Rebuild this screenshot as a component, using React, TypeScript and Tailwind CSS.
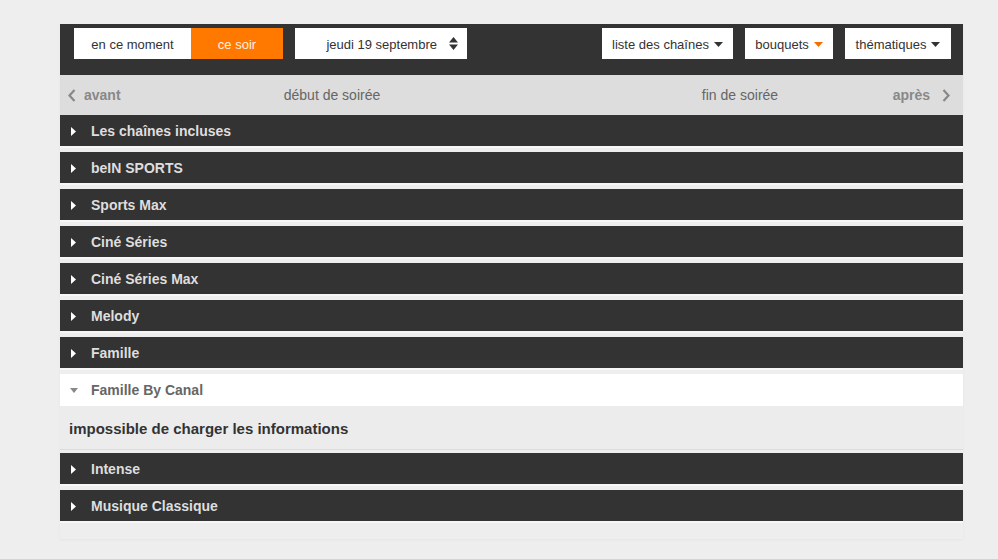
import React from 'react';

const channels = [
  'Les chaînes incluses',
  'beIN SPORTS',
  'Sports Max',
  'Ciné Séries',
  'Ciné Séries Max',
  'Melody',
  'Famille',
];

const Caret = ({ color = '#333' }: { color?: string }) => (
  <svg width="9" height="5" viewBox="0 0 9 5" className="ml-[5px]">
    <path d="M0 0h9L4.5 5z" fill={color} />
  </svg>
);

const Row = ({ title }: { title: string }) => (
  <div className="mb-[4px] border-b-2 border-[#f7f7f7]">
    <div className="flex h-[31px] items-center bg-[#333333] pl-[11px] pt-[1px]">
      <svg width="5" height="9" viewBox="0 0 5 9">
        <path d="M0 0v9l5-4.5z" fill="#fff" />
      </svg>
      <span className="ml-[15px] text-[14px] font-bold text-[#dedede]">{title}</span>
    </div>
  </div>
);

export default function App() {
  return (
    <div
      className="min-h-[559px] w-full bg-[#eeeeee] pt-[24px]"
      style={{ fontFamily: '"Liberation Sans", Arial, sans-serif' }}
    >
      <div className="ml-[60px] w-[903px] pb-[12px] shadow-[0_1px_3px_rgba(0,0,0,0.04)]">
        {/* top filters */}
        <div className="flex h-[51px] items-start bg-[#333333] pl-[14px] pr-[12px] pt-[4px]">
          <div className="flex h-[31px] text-[13px]">
            <button className="w-[117px] bg-white pt-[2px] text-[#333]">en ce moment</button>
            <button className="w-[92px] bg-[#ff7900] pt-[2px] text-[#fff0e0]">ce soir</button>
          </div>
          <div className="ml-[12px] flex h-[31px] w-[172px] items-center justify-end bg-white pr-[9px] pt-[2px] text-[13px] text-[#333]">
            <span>jeudi 19 septembre</span>
            <svg width="9" height="13" viewBox="0 0 9 13" className="ml-[12px] -mt-[3px]">
              <path d="M0 5.5h9L4.5 0zM0 7.5h9L4.5 13z" fill="#333" />
            </svg>
          </div>
          <div className="ml-auto flex gap-[12px] text-[13px] text-[#333]">
            <button className="flex h-[31px] w-[131px] items-center justify-center bg-white pt-[2px]">
              liste des chaînes
              <Caret />
            </button>
            <button className="flex h-[31px] w-[88px] items-center justify-center bg-white pt-[2px]">
              bouquets
              <Caret color="#f16e00" />
            </button>
            <button className="flex h-[31px] w-[106px] items-center justify-center bg-white pt-[2px]">
              thématiques
              <Caret />
            </button>
          </div>
        </div>

        {/* time nav */}
        <div className="flex h-[40px] items-center bg-[#dddddd] text-[14px]">
          <div className="flex w-[160px] items-center pl-[8px] font-bold text-[#888]">
            <svg width="8" height="13" viewBox="0 0 8 13">
              <path d="M6.5 1L1.5 6.5l5 5.5" stroke="#888" strokeWidth="2.2" fill="none" />
            </svg>
            <span className="ml-[8px]">avant</span>
          </div>
          <div className="w-[224px] text-center text-[#666]">début de soirée</div>
          <div className="flex-1" />
          <div className="w-[224px] text-center text-[#666]">fin de soirée</div>
          <div className="flex w-[111px] items-center justify-end pr-[13px] font-bold text-[#888]">
            <span>après</span>
            <svg width="8" height="13" viewBox="0 0 8 13" className="ml-[12px]">
              <path d="M1.5 1l5 5.5-5 5.5" stroke="#888" strokeWidth="2.2" fill="none" />
            </svg>
          </div>
        </div>

        {/* channel groups */}
        <div className="flex flex-col">
          {channels.map((c) => (
            <Row key={c} title={c} />
          ))}

          <div className="flex h-[32px] items-center bg-white pl-[10px] pt-[1px]">
            <svg width="8" height="5" viewBox="0 0 8 5">
              <path d="M0 0h8L4 5z" fill="#888" />
            </svg>
            <span className="ml-[13px] text-[14px] font-bold text-[#666]">Famille By Canal</span>
          </div>
          <div className="mb-[3px] flex h-[44px] items-center border-b border-[#dcdcdc] bg-[#ececec] pl-[9px] pt-[4px] text-[15px] font-bold text-[#333]">
            impossible de charger les informations
          </div>

          <Row title="Intense" />
          <Row title="Musique Classique" />
        </div>
      </div>
    </div>
  );
}
